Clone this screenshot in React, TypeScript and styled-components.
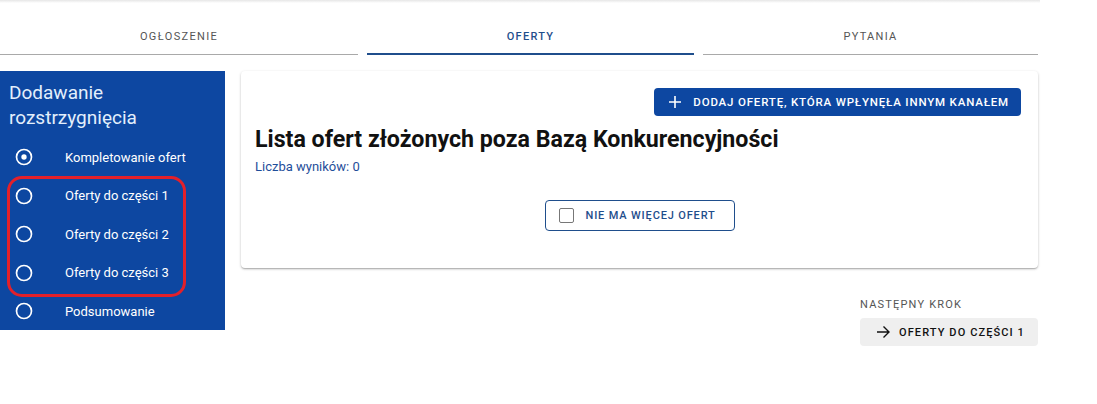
import React from "react";
import styled, { createGlobalStyle } from "styled-components";

const Global = createGlobalStyle`
  html, body { margin: 0; padding: 0; background: #ffffff; }
  body { font-family: Roboto, "Noto Sans", Arial, sans-serif; color: #212121; }
`;

const BLUE = "#0d47a1";

const Page = styled.div`
  width: 1038px;
  position: relative;
`;

const TopShadow = styled.div`
  height: 3px;
  width: 1040px;
  background: linear-gradient(#e6e6e6, #ffffff);
`;

const Tabs = styled.div`
  display: grid;
  grid-template-columns: 358px 327px 335px;
  column-gap: 9px;
  height: 52px;
`;

const Tab = styled.div<{ $active?: boolean }>`
  display: flex;
  align-items: center;
  justify-content: center;
  padding-top: 16px;
  box-sizing: border-box;
  font-size: 11px;
  letter-spacing: 1.3px;
  font-weight: ${(p) => (p.$active ? 500 : 400)};
  color: ${(p) => (p.$active ? "#1f4e8c" : "#555")};
  border-bottom: ${(p) => (p.$active ? "2px solid #1f4e8c" : "1px solid #a9a9a9")};
  height: 52px;
  margin-bottom: ${(p) => (p.$active ? "0" : "1px")};
`;

const Main = styled.div`
  display: flex;
  gap: 16px;
  margin-top: 16px;
  align-items: flex-start;
`;

const Sidebar = styled.aside`
  position: relative;
  width: 225px;
  height: 259px;
  background: ${BLUE};
  padding: 9px 0 0;
  box-sizing: border-box;
`;

const SideTitle = styled.div`
  font-size: 19px;
  line-height: 25px;
  color: #e3effc;
  padding: 0 9px;
  margin-bottom: 8px;
`;

const Step = styled.div`
  display: flex;
  align-items: center;
  height: 38.5px;
  padding-left: 14px;
  color: #ffffff;
  font-size: 13px;
`;

const StepIcon = styled.span`
  width: 20px;
  height: 20px;
  display: flex;
  margin-right: 31px;
`;

const Highlight = styled.div`
  position: absolute;
  left: 7px;
  top: 105px;
  width: 179px;
  height: 121px;
  box-sizing: border-box;
  border: 3px solid #e3202a;
  border-radius: 15px;
  pointer-events: none;
`;

const Content = styled.div`
  width: 797px;
  display: flex;
  flex-direction: column;
`;

const Card = styled.section`
  background: #fff;
  border-radius: 4px;
  box-shadow: 0 1px 3px rgba(0, 0, 0, 0.2), 0 1px 1px rgba(0, 0, 0, 0.12), 0 2px 2px -1px rgba(0, 0, 0, 0.1);
  padding: 17px 17px 37px 14px;
  height: 197px;
  box-sizing: border-box;
  display: flex;
  flex-direction: column;
`;

const CardTop = styled.div`
  display: flex;
  justify-content: flex-end;
`;

const PrimaryButton = styled.button`
  display: flex;
  align-items: center;
  height: 28px;
  padding: 0 12px 0 14px;
  border: none;
  border-radius: 4px;
  background: ${BLUE};
  color: #fff;
  font-family: Roboto, sans-serif;
  font-size: 11.5px;
  font-weight: 500;
  letter-spacing: 0.82px;
  gap: 11px;
`;

const Title = styled.h1`
  margin: 8px 0 0;
  font-size: 23.2px;
  line-height: 30px;
  font-weight: 700;
  color: #111;
`;

const Count = styled.div`
  margin-top: 5px;
  font-size: 13px;
  color: #1f4e9a;
`;

const Center = styled.div`
  display: flex;
  justify-content: center;
  margin-top: auto;
  padding-left: 3px;
`;

const OutlineButton = styled.button`
  display: flex;
  align-items: center;
  gap: 12px;
  height: 31px;
  width: 190px;
  padding: 0 0 0 13px;
  border: 1px solid #1f4e8c;
  border-radius: 4px;
  background: #fff;
  color: #1f4e8c;
  font-family: Roboto, sans-serif;
  font-size: 11px;
  font-weight: 500;
  letter-spacing: 0.85px;
  box-sizing: border-box;
`;

const CheckBox = styled.span`
  width: 13px;
  height: 13px;
  border: 1px solid #777;
  border-radius: 2px;
`;

const Next = styled.div`
  align-self: flex-end;
  width: 178px;
  margin-top: 30px;
  display: flex;
  flex-direction: column;
  gap: 7px;
`;

const NextLabel = styled.div`
  font-size: 11px;
  letter-spacing: 1.2px;
  color: #555;
`;

const NextButton = styled.button`
  display: flex;
  align-items: center;
  gap: 9px;
  height: 28px;
  padding: 0 0 0 16px;
  border: none;
  border-radius: 4px;
  background: #efefef;
  color: #111;
  font-family: Roboto, sans-serif;
  font-size: 11px;
  font-weight: 500;
  letter-spacing: 1.1px;
`;

const RadioOff = () => (
  <svg width="20" height="20" viewBox="0 0 24 24" fill="none" stroke="#fff" strokeWidth="2">
    <circle cx="12" cy="12" r="9" />
  </svg>
);

const RadioOn = () => (
  <svg width="20" height="20" viewBox="0 0 24 24" fill="none" stroke="#fff" strokeWidth="2">
    <circle cx="12" cy="12" r="9" />
    <circle cx="12" cy="12" r="3.2" fill="#fff" stroke="none" />
  </svg>
);

const Plus = () => (
  <svg width="14" height="14" viewBox="0 0 14 14" stroke="#fff" strokeWidth="1.6">
    <path d="M7 1v12M1 7h12" />
  </svg>
);

const Arrow = () => (
  <svg width="14" height="14" viewBox="0 0 14 14" fill="none" stroke="#111" strokeWidth="1.4">
    <path d="M1 7h12M7.5 1.5L13 7l-5.5 5.5" />
  </svg>
);

const steps = [
  { label: "Kompletowanie ofert", active: true },
  { label: "Oferty do części 1" },
  { label: "Oferty do części 2" },
  { label: "Oferty do części 3" },
  { label: "Podsumowanie" },
];

export default function App() {
  return (
    <Page>
      <Global />
      <TopShadow />
      <Tabs>
        <Tab>OGŁOSZENIE</Tab>
        <Tab $active>OFERTY</Tab>
        <Tab>PYTANIA</Tab>
      </Tabs>
      <Main>
        <Sidebar>
          <SideTitle>
            Dodawanie
            <br />
            rozstrzygnięcia
          </SideTitle>
          {steps.map((s) => (
            <Step key={s.label}>
              <StepIcon>{s.active ? <RadioOn /> : <RadioOff />}</StepIcon>
              {s.label}
            </Step>
          ))}
          <Highlight />
        </Sidebar>
        <Content>
          <Card>
            <CardTop>
              <PrimaryButton>
                <Plus />
                DODAJ OFERTĘ, KTÓRA WPŁYNĘŁA INNYM KANAŁEM
              </PrimaryButton>
            </CardTop>
            <Title>Lista ofert złożonych poza Bazą Konkurencyjności</Title>
            <Count>Liczba wyników: 0</Count>
            <Center>
              <OutlineButton>
                <CheckBox />
                NIE MA WIĘCEJ OFERT
              </OutlineButton>
            </Center>
          </Card>
          <Next>
            <NextLabel>NASTĘPNY KROK</NextLabel>
            <NextButton>
              <Arrow />
              OFERTY DO CZĘŚCI 1
            </NextButton>
          </Next>
        </Content>
      </Main>
    </Page>
  );
}
